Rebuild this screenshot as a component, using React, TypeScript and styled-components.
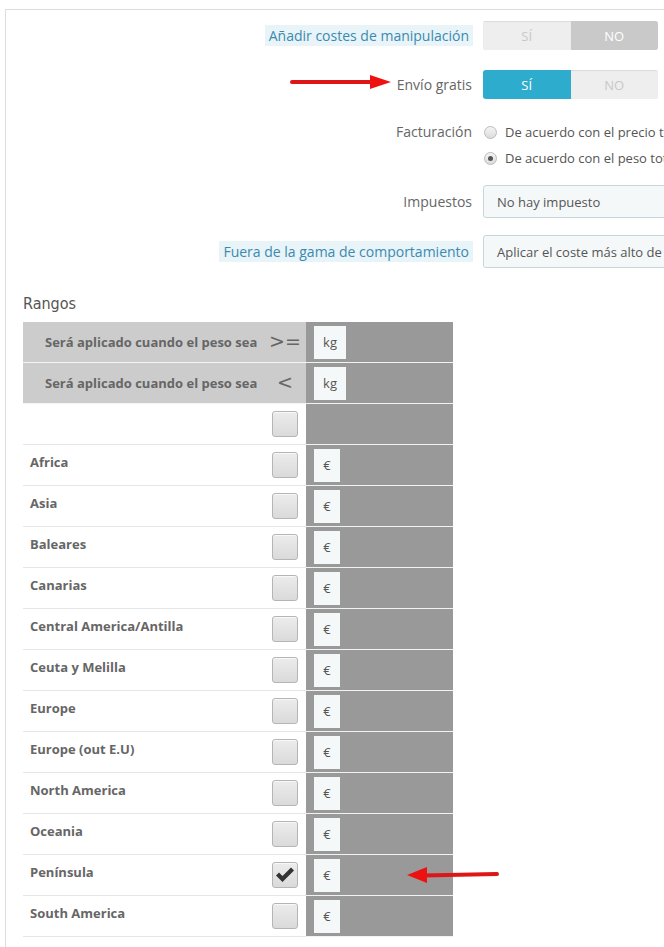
import React from 'react';
import styled, { createGlobalStyle } from 'styled-components';

const GlobalStyle = createGlobalStyle`
  html, body {
    margin: 0;
    padding: 0;
    background: #fff;
    overflow: hidden;
  }
  body {
    font-family: "Open Sans", "Liberation Sans", sans-serif;
    font-size: 13px;
    color: #555;
  }
  * {
    box-sizing: border-box;
  }
`;

const zones = [
  'Africa',
  'Asia',
  'Baleares',
  'Canarias',
  'Central America/Antilla',
  'Ceuta y Melilla',
  'Europe',
  'Europe (out E.U)',
  'North America',
  'Oceania',
  'Península',
  'South America',
];

export default function App() {
  return (
    <Page>
      <GlobalStyle />
      <Panel>
        <FormRow $mb={20}>
          <LabelCol>
            <TipLabel>Añadir costes de manipulación</TipLabel>
          </LabelCol>
          <Toggle>
            <ToggleHalf>SÍ</ToggleHalf>
            <ToggleHalf $on="grey">NO</ToggleHalf>
          </Toggle>
        </FormRow>

        <FormRow $mb={20}>
          <LabelCol>
            <Label>Envío gratis</Label>
          </LabelCol>
          <Toggle>
            <ToggleHalf $on="blue">SÍ</ToggleHalf>
            <ToggleHalf>NO</ToggleHalf>
          </Toggle>
        </FormRow>

        <FormRow $mb={14} $top>
          <LabelCol $top>
            <Label>Facturación</Label>
          </LabelCol>
          <RadioList>
            <RadioItem>
              <Radio />
              De acuerdo con el precio total
            </RadioItem>
            <RadioItem>
              <Radio $checked />
              De acuerdo con el peso total
            </RadioItem>
          </RadioList>
        </FormRow>

        <FormRow $mb={17}>
          <LabelCol>
            <Label>Impuestos</Label>
          </LabelCol>
          <Select>No hay impuesto</Select>
        </FormRow>

        <FormRow $mb={0}>
          <LabelCol>
            <TipLabel>Fuera de la gama de comportamiento</TipLabel>
          </LabelCol>
          <Select>Aplicar el coste más alto de la gama definida</Select>
        </FormRow>

        <Ranges>
          <RangesTitle>Rangos</RangesTitle>
          <RangeTable>
            <Row>
              <NameCell $head>
                <HeadText>Será aplicado cuando el peso sea</HeadText>
                <Mark $op>&gt;=</Mark>
              </NameCell>
              <PriceCell>
                <Unit $wide>kg</Unit>
              </PriceCell>
            </Row>
            <Row>
              <NameCell $head>
                <HeadText>Será aplicado cuando el peso sea</HeadText>
                <Mark $op>&lt;</Mark>
              </NameCell>
              <PriceCell>
                <Unit $wide>kg</Unit>
              </PriceCell>
            </Row>
            <Row>
              <NameCell>
                <ZoneName />
                <Mark>
                  <Checkbox />
                </Mark>
              </NameCell>
              <PriceCell />
            </Row>
            {zones.map((z) => (
              <Row key={z}>
                <NameCell>
                  <ZoneName>{z}</ZoneName>
                  <Mark>
                    <Checkbox>
                      {z === 'Península' && (
                        <svg width="20" height="18" viewBox="0 0 20 18">
                          <path
                            d="M1 9.5 L4 6.5 L7.5 10 L16 1.5 L19 4.5 L7.5 16 Z"
                            fill="#333"
                          />
                        </svg>
                      )}
                    </Checkbox>
                  </Mark>
                </NameCell>
                <PriceCell>
                  <Unit>€</Unit>
                </PriceCell>
              </Row>
            ))}
          </RangeTable>
        </Ranges>
      </Panel>

      <Arrow style={{ left: 289, top: 74 }} width="103" height="16" viewBox="0 0 103 16">
        <line x1="3" y1="8" x2="84" y2="8" stroke="#dd1717" strokeWidth="4" strokeLinecap="round" />
        <polygon points="81,1 102,8 81,15" fill="#ee1111" />
      </Arrow>
      <Arrow style={{ left: 405, top: 866 }} width="96" height="18" viewBox="0 0 96 18">
        <line x1="18" y1="9.5" x2="92" y2="8" stroke="#dd1717" strokeWidth="4" strokeLinecap="round" />
        <polygon points="2,9 22,1 22,17" fill="#ee1111" />
      </Arrow>
    </Page>
  );
}

const Page = styled.div`
  position: relative;
  width: 664px;
  height: 947px;
  overflow: hidden;
`;

const Panel = styled.div`
  margin: 9px 0 0 5px;
  width: 900px;
  min-height: 940px;
  padding-top: 11px;
  border-left: 1px solid #ddd;
  border-top: 1px solid #ddd;
`;

const FormRow = styled.div<{ $mb: number; $top?: boolean }>`
  display: grid;
  grid-template-columns: 466px 1fr;
  column-gap: 11px;
  align-items: ${(p) => (p.$top ? 'start' : 'center')};
  margin-bottom: ${(p) => p.$mb}px;
`;

const LabelCol = styled.div<{ $top?: boolean }>`
  text-align: right;
  line-height: ${(p) => (p.$top ? '26px' : 'normal')};
`;

const Label = styled.span`
  font-size: 14px;
  color: #666;
`;

const TipLabel = styled.span`
  display: inline-block;
  font-size: 14px;
  color: #3b8ab0;
  background: #e8f4f8;
  padding: 1px 4px;
  margin-right: -1px;
`;

const Toggle = styled.div`
  display: flex;
  width: 175px;
  height: 29px;
  border-radius: 3px;
  overflow: hidden;
  box-shadow: inset 0 0 0 1px #ddd;
`;

const ToggleHalf = styled.div<{ $on?: 'grey' | 'blue' }>`
  flex: 1;
  display: flex;
  align-items: center;
  justify-content: center;
  font-size: 13px;
  color: ${(p) => (p.$on ? '#fff' : '#c8c8c8')};
  background: ${(p) =>
    p.$on === 'blue' ? '#2eacce' : p.$on === 'grey' ? '#c9c9c9' : '#eeeeee'};
  box-shadow: ${(p) => (p.$on ? 'none' : 'inset 0 1px 1px rgba(0,0,0,0.08)')};
`;

const RadioList = styled.div`
  display: flex;
  flex-direction: column;
`;

const RadioItem = styled.div`
  display: flex;
  align-items: center;
  height: 26px;
  gap: 8px;
  font-size: 13px;
  color: #555;
  white-space: nowrap;
`;

const Radio = styled.span<{ $checked?: boolean }>`
  position: relative;
  width: 13px;
  height: 13px;
  margin-left: 1px;
  border-radius: 50%;
  border: 1px solid #bbb;
  background: linear-gradient(#f4f4f4, #dcdcdc);

  &::after {
    content: '';
    display: ${(p) => (p.$checked ? 'block' : 'none')};
    position: absolute;
    left: 3px;
    top: 3px;
    width: 5px;
    height: 5px;
    border-radius: 50%;
    background: #555;
  }
`;

const Select = styled.div`
  display: flex;
  align-items: center;
  width: 320px;
  height: 33px;
  padding-left: 13px;
  border: 1px solid #c7d6db;
  border-radius: 3px;
  background: #f5f8f9;
  font-size: 13px;
  color: #555;
  white-space: nowrap;
`;

const Ranges = styled.div`
  padding-left: 17px;
  margin-top: 26px;
`;

const RangesTitle = styled.div`
  font-family: "Liberation Sans Narrow", "DejaVu Sans Condensed", "Open Sans", sans-serif;
  font-stretch: condensed;
  font-size: 16px;
  line-height: 20px;
  color: #555;
  margin-bottom: 8px;
`;

const RangeTable = styled.div`
  width: 430px;
`;

const Row = styled.div`
  display: flex;
  height: 41px;
`;

const NameCell = styled.div<{ $head?: boolean }>`
  display: flex;
  align-items: center;
  width: 283px;
  padding-left: ${(p) => (p.$head ? '22px' : '7px')};
  padding-right: 8px;
  background: ${(p) => (p.$head ? '#cccccc' : '#fff')};
  border-bottom: 1px solid ${(p) => (p.$head ? '#f4f4f4' : '#e6e6e6')};
`;

const HeadText = styled.span`
  flex: 1;
  font-size: 13px;
  font-weight: 700;
  color: #666;
`;

const ZoneName = styled.span`
  flex: 1;
  font-size: 13px;
  font-weight: 700;
  color: #666;
  padding-bottom: 6px;
`;

const Mark = styled.div<{ $op?: boolean }>`
  display: flex;
  justify-content: center;
  width: 26px;
  font-family: "DejaVu Sans", "Open Sans", sans-serif;
  font-size: 19px;
  color: #666;
  white-space: nowrap;
  padding-bottom: ${(p) => (p.$op ? '2px' : '0')};
`;

const Checkbox = styled.span`
  display: flex;
  align-items: center;
  justify-content: center;
  width: 26px;
  height: 26px;
  border: 1px solid #b5b5b5;
  border-radius: 3px;
  background: linear-gradient(#ececec, #dadada);
  box-shadow: inset 0 1px 0 #f8f8f8;
`;

const PriceCell = styled.div`
  flex: 1;
  display: flex;
  align-items: center;
  padding-left: 8px;
  background: #999;
  border-bottom: 1px solid #f2f2f2;
`;

const Unit = styled.div<{ $wide?: boolean }>`
  display: flex;
  align-items: center;
  justify-content: center;
  width: ${(p) => (p.$wide ? '32px' : '26px')};
  height: 33px;
  background: #f5f8f9;
  font-size: 13px;
  color: #555;
`;

const Arrow = styled.svg`
  position: absolute;
`;
